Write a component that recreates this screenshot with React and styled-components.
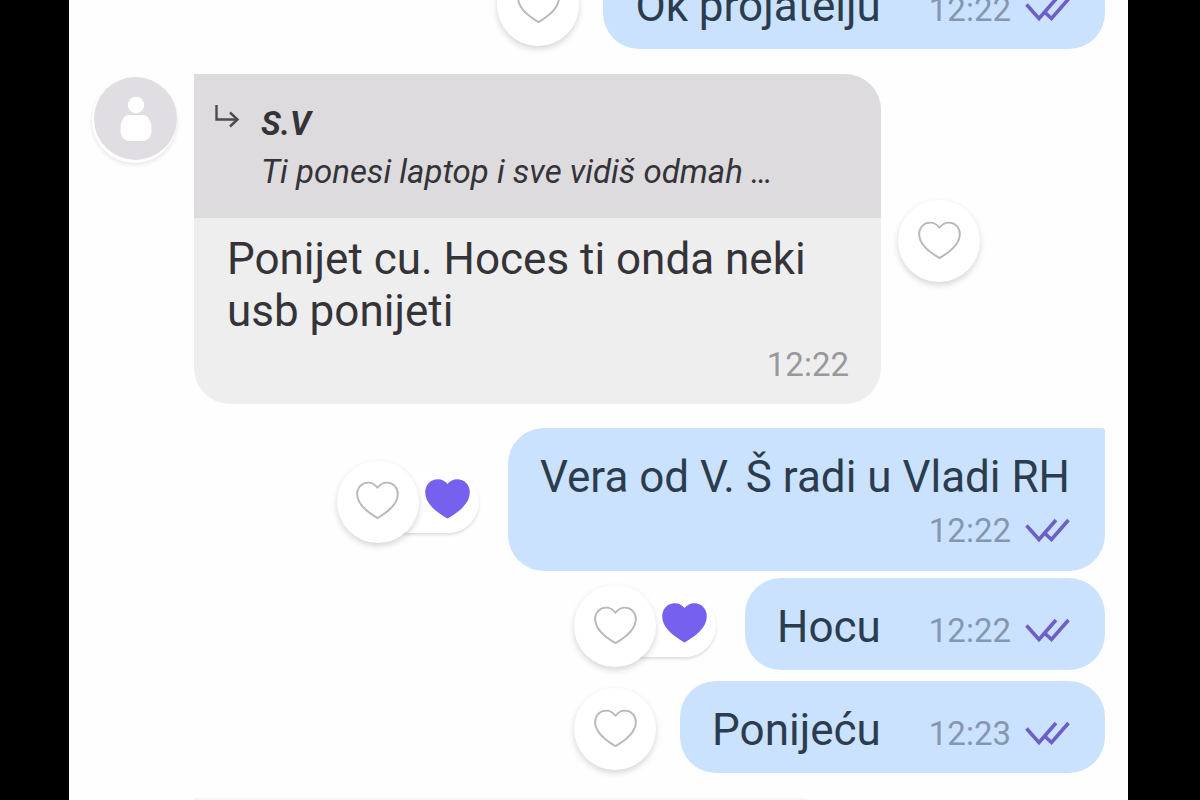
import React from 'react';
import styled, { createGlobalStyle, css } from 'styled-components';

const GlobalStyle = createGlobalStyle`
  * {
    box-sizing: border-box;
  }

  body {
    margin: 0;
    background: #000;
    font-family: Roboto, 'Liberation Sans', sans-serif;
  }
`;

const Screen = styled.main`
  height: 100vh;
  margin: 0 72px 0 69px;
  overflow: hidden;
  background: #fefefe;
`;

/* The thread is scrolled a little past its first message */
const Thread = styled.div`
  display: flex;
  flex-direction: column;
  margin-top: -43px;
  padding: 0 23px 0 25px;
`;

const Row = styled.div`
  display: flex;
  align-items: center;
  flex-shrink: 0;
  justify-content: ${({ $own }) => ($own ? 'flex-end' : 'flex-start')};
  gap: ${({ $own }) => ($own ? '24px' : '17px')};
  margin-bottom: ${({ $gap }) => $gap || 24}px;
`;

const Avatar = styled.div`
  display: flex;
  flex-shrink: 0;
  align-self: flex-start;
  align-items: center;
  justify-content: center;
  width: 83px;
  height: 83px;
  margin-top: 3px;
  border-radius: 50%;
  background: #e0dee2;
  box-shadow: -1px 2px 0 1px #fff, -1px 4px 4px 1px #e6e5e9;
`;

const bubbleBase = css`
  border-radius: 36px;
  overflow: hidden;
`;

const OwnBubble = styled.div`
  ${bubbleBase}
  display: flex;
  flex-direction: ${({ $stacked }) => ($stacked ? 'column' : 'row')};
  align-items: ${({ $stacked }) => ($stacked ? 'flex-end' : 'baseline')};
  gap: ${({ $stacked }) => ($stacked ? '8px' : '48px')};
  padding: ${({ $stacked }) => ($stacked ? '23px 35px 20px 32px' : '23px 35px 17px 32px')};
  border-top-right-radius: ${({ $stacked }) => ($stacked ? '3px' : '36px')};
  background: #cbe2fe;
  color: #2b3c4e;
`;

const QuoteBubble = styled.div`
  ${bubbleBase}
  flex: 0 1 ${({ $width }) => $width}px;
  min-width: 0;
  border-top-left-radius: 0;
  background: #efeeef;
  color: #343338;
`;

/* Top edge of the incoming message below the fold */
const NextBubble = styled.div`
  flex: 0 1 640px;
  height: 72px;
  margin-left: 100px;
  border-radius: 0 36px 36px 36px;
  background: #f5f5f5;
`;

const Quote = styled.div`
  display: flex;
  gap: 21px;
  height: 144px;
  padding: 26px 40px 0 20px;
  background: #dddbde;
  font-size: 33px;
  font-style: italic;
  line-height: 48px;
  white-space: nowrap;
`;

const QuoteText = styled.div`
  min-width: 0;
`;

const Author = styled.div`
  font-weight: 700;
`;

const Body = styled.div`
  display: flex;
  flex-direction: column;
  gap: 8px;
  padding: 15px 32px 19px 33px;
`;

const Text = styled.div`
  font-size: 44px;
  line-height: 52px;
`;

const Meta = styled.div`
  display: flex;
  align-items: center;
  align-self: ${({ $end }) => ($end ? 'flex-end' : 'auto')};
  gap: 14px;
  color: ${({ $own }) => ($own ? '#8597b0' : '#99989c')};
  font-size: 33px;
  line-height: 40px;
`;

const Reactions = styled.div`
  display: flex;
  flex-shrink: 0;
  align-items: center;
  margin-right: ${({ $liked }) => ($liked ? '5px' : '0')};
  padding-top: 4px;
`;

const LikeButton = styled.button`
  display: flex;
  z-index: 1;
  align-items: center;
  justify-content: center;
  width: 82px;
  height: 82px;
  padding: 0 0 2px;
  border: 0;
  border-radius: 50%;
  background: #fff;
  box-shadow: 0 3px 6px rgba(0, 0, 0, 0.16);
`;

const LikedButton = styled.button`
  display: flex;
  align-items: center;
  justify-content: flex-end;
  width: 101px;
  height: 62px;
  margin-left: -41px;
  padding: 0 9px 6px 0;
  border: 0;
  border-radius: 32px;
  background: #fff;
  box-shadow: 0 2px 3px rgba(0, 0, 0, 0.13);
`;

const HeartIcon = ({ filled }) => (
  <svg
    width={filled ? 45 : 43} height={filled ? 40 : 39} viewBox="0 0 44 39"
    fill={filled ? '#7660ee' : 'none'} stroke={filled ? '#7660ee' : '#b9b9b9'}
    strokeWidth="2" strokeLinejoin="round" aria-hidden="true"
  >
    <path d="M22 6.5C19.5 3 16 1.2 12.5 1.2C6 1.2 1.2 6 1.2 13C1.2 23.5 11 31 22 37.5C33 31 42.8 23.5 42.8 13C42.8 6 38 1.2 31.5 1.2C28 1.2 24.5 3 22 6.5Z" />
  </svg>
);

const ReadIcon = () => (
  <svg
    width="45" height="26" viewBox="0 0 45 26"
    fill="none" stroke="#6e5fc6" strokeWidth="3.6" role="img" aria-label="Seen"
  >
    <path d="M1.5 7.500L14 21.500L31 2" />
    <path d="M20 15.500L26.500 21.500L43.500 2" />
  </svg>
);

const ReplyIcon = () => (
  <svg
    width="26" height="34" viewBox="0 0 26 34"
    fill="none" stroke="#4c4b50" strokeWidth="2.4" aria-hidden="true"
  >
    <path d="M2.500 5V19.500H23" />
    <path d="M16 12.500L23.500 19.500L16 26.500" />
  </svg>
);

const PersonIcon = () => (
  <svg width="32" height="46" viewBox="0 0 32 46" fill="#fff" aria-hidden="true">
    <circle cx="16" cy="9" r="8.2" />
    <path d="M9 19H23C28 19 31.500 25 31.500 34C31.500 41 28 45 21 45H11C4 45 0.500 41 0.500 34C0.500 25 4 19 9 19Z" />
  </svg>
);

const Like = ({ liked }) => (
  <Reactions $liked={liked}>
    <LikeButton type="button" aria-label="Like">
      <HeartIcon />
    </LikeButton>
    {liked && (
      <LikedButton type="button" aria-label="Show likes">
        <HeartIcon filled />
      </LikedButton>
    )}
  </Reactions>
);

const OwnMessage = ({ text, time, liked, stacked, gap }) => (
  <Row $own $gap={gap}>
    <Like liked={liked} />
    <OwnBubble $stacked={stacked}>
      <Text>{text}</Text>
      <Meta $own>
        <time>{time}</time>
        <ReadIcon />
      </Meta>
    </OwnBubble>
  </Row>
);

const App = () => (
  <>
    <GlobalStyle />
    <Screen>
      <Thread>
        <OwnMessage text="Ok projatelju" time="12:22" gap={25} />

        <Row>
          <Avatar>
            <PersonIcon />
          </Avatar>
          <QuoteBubble $width={687}>
            <Quote>
              <ReplyIcon />
              <QuoteText>
                <Author>S.V</Author>
                <div>Ti ponesi laptop i sve vidiš odmah …</div>
              </QuoteText>
            </Quote>
            <Body>
              <Text>Ponijet cu. Hoces ti onda neki usb ponijeti</Text>
              <Meta $end>
                <time>12:22</time>
              </Meta>
            </Body>
          </QuoteBubble>
          <Like />
        </Row>

        <OwnMessage text="Vera od V. Š radi u Vladi RH" time="12:22" liked stacked gap={7} />
        <OwnMessage text="Hocu" time="12:22" liked gap={11} />
        <OwnMessage text="Ponijeću" time="12:23" gap={25} />

        <Row>
          <NextBubble />
        </Row>
      </Thread>
    </Screen>
  </>
);

export default App;
